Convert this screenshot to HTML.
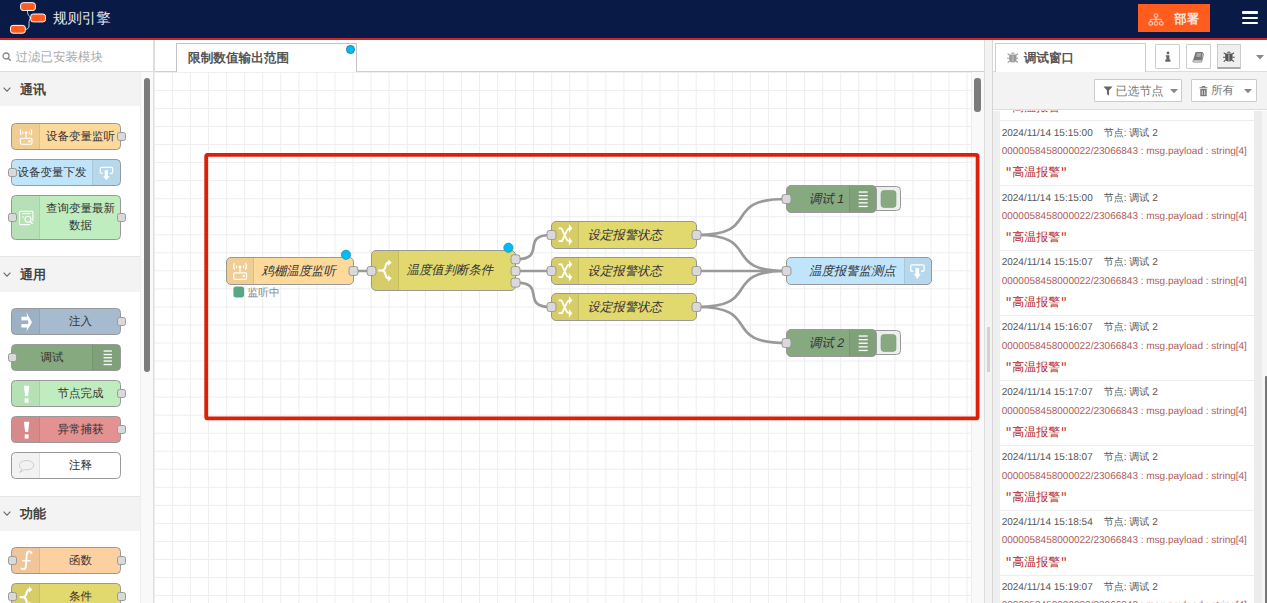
<!DOCTYPE html><html><head><meta charset="utf-8"><style>
*{box-sizing:border-box}
html,body{margin:0;padding:0}
body{text-rendering:geometricPrecision;width:1267px;height:603px;overflow:hidden;position:relative;background:#fff;font-family:"Liberation Sans",sans-serif;color:#333}
.a{position:absolute}
.hdr{left:0;top:0;width:1267px;height:38px;background:#0a1a46;border-bottom:2.5px solid #c62a2a;height:40px}
.cat{left:0;width:140px;height:36px;background:#f3f3f3;border-top:1px solid #e6e6e6}
.cat .chev{position:absolute;left:2.5px;top:14.2px;width:8px;height:5px}
.cat .t{position:absolute;left:20px;top:9px;font-size:13px;font-weight:bold;color:#444;line-height:16px}
.pn{left:11px;width:110px;border:1px solid #999;border-radius:4.5px;}
.pn .ic{position:absolute;top:0;bottom:0;width:28px;border-right:1px solid rgba(0,0,0,0.07);background:rgba(0,0,0,0.05)}
.pn .lb{position:absolute;top:2.6px;bottom:0;font-size:11.5px;color:#333;display:flex;align-items:center;justify-content:center;text-align:center;line-height:17.6px}
.port{position:absolute;width:9px;height:9px;background:#d9d9d9;border:1px solid #999;border-radius:2.5px}
.dbg{left:1000px;width:254px;height:65px;border-bottom:1px solid #eee;background:#fff}
.dbg .d{position:absolute;left:1.7px;top:6.3px;font-size:10px;color:#555;white-space:nowrap;line-height:12px}
.dbg .p{position:absolute;left:1.7px;top:24.6px;font-size:10px;color:#ad5c5c;white-space:nowrap;line-height:12px}
.dbg .s{position:absolute;left:5px;top:44px;font-size:12px;font-family:'Liberation Mono',monospace;color:#b72828;white-space:nowrap;line-height:16px}
</style></head><body>
<div class="a hdr"></div>
<svg class="a" style="left:0;top:0" width="60" height="38" viewBox="0 0 60 38">
<path d="M27.5 11 C27.5 16 30 16 30.5 18 C29 20 29 22 29 26 C29 28 27.5 29.3 25.8 29.3" fill="none" stroke="#dfe2ea" stroke-width="0.9"/><circle cx="30.3" cy="18" r="0.8" fill="#fff"/>
<rect x="20.6" y="2.7" width="14.8" height="7.8" rx="2.5" fill="#ff5c1e" stroke="#fff" stroke-width="1"/>
<rect x="30.7" y="14" width="14.8" height="7.9" rx="2.5" fill="#ff5c1e" stroke="#fff" stroke-width="1"/>
<rect x="10.5" y="25.4" width="14.8" height="7.8" rx="2.5" fill="#ff5c1e" stroke="#fff" stroke-width="1"/>
</svg>
<div class="a" style="left:53px;top:8.5px;font-size:14.4px;color:#e6e8ee;line-height:20px;letter-spacing:0px">规则引擎</div>
<div class="a" style="left:1138px;top:4.3px;width:72px;height:27.4px;background:#ff5c1e"></div>
<svg class="a" style="left:1148px;top:13px" width="16" height="13" viewBox="0 0 16 13">
<g fill="none" stroke="#fbe2d4" stroke-width="0.9">
<rect x="6.3" y="1" width="3.4" height="3" rx="0.4"/>
<path d="M8 4 V6.3 M2.7 8.8 V6.3 H13.3 V8.8 M8 6.3 V8.8"/>
<rect x="1" y="8.8" width="3.4" height="3.2" rx="0.4"/>
<rect x="6.3" y="8.8" width="3.4" height="3.2" rx="0.4"/>
<rect x="11.6" y="8.8" width="3.4" height="3.2" rx="0.4"/>
</g></svg>
<div class="a" style="left:1174.3px;top:11px;font-size:12.4px;font-weight:bold;color:#fbe6dc;line-height:16px">部署</div>
<div class="a" style="left:1242px;top:11.4px;width:15.6px;height:2.5px;background:#fff;border-radius:1px"></div>
<div class="a" style="left:1242px;top:16.8px;width:15.6px;height:2.5px;background:#fff;border-radius:1px"></div>
<div class="a" style="left:1242px;top:21.7px;width:15.6px;height:2.5px;background:#fff;border-radius:1px"></div>
<div class="a" style="left:0;top:40px;width:153px;height:32px;background:#fff;border-bottom:1px solid #ddd"></div>
<svg class="a" style="left:2px;top:52px" width="10" height="10" viewBox="0 0 10 10"><circle cx="4" cy="4" r="3" fill="none" stroke="#888" stroke-width="1.3"/><path d="M6.2 6.2 L8.8 8.8" stroke="#888" stroke-width="1.5"/></svg>
<div class="a" style="left:15.5px;top:48.8px;font-size:12.5px;color:#aaa;line-height:16px">过滤已安装模块</div>
<div class="a" style="left:140px;top:72px;width:13px;height:531px;background:#f9f9f9;border-left:1px solid #eee"></div>
<div class="a" style="left:143.6px;top:77.8px;width:6.4px;height:294px;background:#7b7b7b;border-radius:3.2px"></div>
<div class="a" style="left:153px;top:40px;width:2px;height:563px;background:#ddd"></div>
<div class="a cat" style="top:72.0px;height:34px;border-top-color:#f3f3f3"><svg class="chev" style="top:14.2px" viewBox="0 0 8 5"><path d="M0.6 0.7 L4 4.1 L7.4 0.7" fill="none" stroke="#666" stroke-width="1.1"/></svg><div class="t" style="top:9.0px">通讯</div></div>
<div class="a cat" style="top:256.0px;"><svg class="chev" style="top:15.4px" viewBox="0 0 8 5"><path d="M0.6 0.7 L4 4.1 L7.4 0.7" fill="none" stroke="#666" stroke-width="1.1"/></svg><div class="t" style="top:10.2px">通用</div></div>
<div class="a cat" style="top:496.0px;height:35px"><svg class="chev" style="top:14.2px" viewBox="0 0 8 5"><path d="M0.6 0.7 L4 4.1 L7.4 0.7" fill="none" stroke="#666" stroke-width="1.1"/></svg><div class="t" style="top:9.0px">功能</div></div>
<div class="a pn" style="top:123.0px;height:27.0px;background:#fdd99b"><div class="ic" style="left:0;border-radius:3.5px 0 0 3.5px"><svg width="28" height="26.2" viewBox="0 0 27 26.2" style="position:absolute;left:0;top:0"><g transform="translate(1.08 0.08) scale(0.92)"><g fill="none" stroke="#fff" stroke-width="1.2"><rect x="7.3" y="15.4" width="12.7" height="6.5" rx="1.2"/><path d="M13.5 9.5 V15"/><path d="M8 5.8 Q6.2 9 8 12.2 M19 5.8 Q20.8 9 19 12.2 M10.2 8 Q9.4 9.3 10.2 10.7 M16.8 8 Q17.6 9.3 16.8 10.7"/></g><circle cx="13.5" cy="9.5" r="1.5" fill="#fff"/><circle cx="17.2" cy="18.6" r="1.3" fill="#fff"/></g></svg></div><div class="lb" style="left:29px;right:0;">设备变量监听</div></div>
<div class="a port" style="left:117px;top:132.0px"></div>
<div class="a pn" style="top:159.0px;height:27.0px;background:#c0e4fa"><div class="ic" style="right:0;border-right:none;border-left:1px solid rgba(0,0,0,0.07);border-radius:0 3.5px 3.5px 0"><svg width="28" height="26.2" viewBox="0 0 27 26.2" style="position:absolute;left:0;top:0"><g transform="translate(1.08 0.68) scale(0.92)"><path d="M8.7 13.75 H7.5 Q6.25 13.75 6.25 12.5 V8.6 Q6.25 7.35 7.5 7.35 H18.4 Q19.65 7.35 19.65 8.6 V12.5 Q19.65 13.75 18.4 13.75 H16.6" fill="none" stroke="#fff" stroke-width="1.4"/><path d="M11 10.4 H14.6 V16.8 H16.3 L12.8 21.4 L9.3 16.8 H11 Z" fill="#fff"/></g></svg></div><div class="lb" style="left:0;right:28px">设备变量下发</div></div>
<div class="a port" style="left:7.5px;top:168.0px"></div>
<div class="a pn" style="top:195.0px;height:45.0px;background:#c0edc0"><div class="ic" style="left:0;border-radius:3.5px 0 0 3.5px"><svg width="28" height="44.3" viewBox="0 0 27 44.3" style="position:absolute;left:0;top:0"><g fill="none" stroke="#fff" stroke-width="1.1"><path d="M20.4 25.3 V16.3 Q20.4 15.4 19.5 15.4 H7.9 Q7 15.4 7 16.3 V27.7 Q7 28.6 7.9 28.6 H17.5"/><path d="M9.7 17.6 H18.3"/><path d="M9.7 21 H11.6"/><circle cx="15.5" cy="23.3" r="3"/><path d="M17.7 25.5 L20.2 28"/></g></svg></div><div class="lb" style="left:29px;right:0;top:1.3px">查询变量最新<br>数据</div></div>
<div class="a port" style="left:7.5px;top:213.0px"></div>
<div class="a port" style="left:117px;top:213.0px"></div>
<div class="a pn" style="top:308.0px;height:27.0px;background:#a6bbcf"><div class="ic" style="left:0;border-radius:3.5px 0 0 3.5px"><svg width="28" height="26.5" viewBox="0 0 27 26.5" style="position:absolute;left:0;top:0"><g transform="translate(0.00 -0.25) scale(1.00)"><rect x="8.9" y="8" width="6.6" height="3.6" fill="#fff"/><rect x="8.9" y="15.3" width="6.6" height="3.5" fill="#fff"/><path d="M13.8 3.4 L19.5 13.4 L13.8 23.1 L15.9 13.4 Z" fill="#fff"/></g></svg></div><div class="lb" style="left:29px;right:0;">注入</div></div>
<div class="a port" style="left:117px;top:317.0px"></div>
<div class="a pn" style="top:344.0px;height:27.0px;background:#87a980"><div class="ic" style="right:0;border-right:none;border-left:1px solid rgba(0,0,0,0.07);border-radius:0 3.5px 3.5px 0"><svg width="28" height="26.2" viewBox="0 0 27 26.2" style="position:absolute;left:0;top:0"><g transform="translate(0.00 -0.60) scale(1.00)"><g fill="#fff"><rect x="10.1" y="6" width="8.3" height="1.3"/><rect x="10.1" y="9.5" width="8.3" height="1.3"/><rect x="10.1" y="12.7" width="8.3" height="1.3"/><rect x="10.1" y="16" width="8.3" height="1.3"/><rect x="10.1" y="19.5" width="8.3" height="1.3"/></g></g></svg></div><div class="lb" style="left:0;right:28px">调试</div></div>
<div class="a port" style="left:7.5px;top:353.0px"></div>
<div class="a pn" style="top:380.0px;height:27.0px;background:#c0edc0"><div class="ic" style="left:0;border-radius:3.5px 0 0 3.5px"><svg width="28" height="26.2" viewBox="0 0 27 26.2" style="position:absolute;left:0;top:0"><g transform="translate(0.00 -0.50) scale(1.00)"><path d="M11.4 5.2 H16.8 L15.6 15.6 H12.6 Z" fill="#fff"/><rect x="12.2" y="17.9" width="3.9" height="4.2" fill="#fff"/></g></svg></div><div class="lb" style="left:29px;right:0;">节点完成</div></div>
<div class="a port" style="left:117px;top:389.0px"></div>
<div class="a pn" style="top:416.0px;height:27.0px;background:#e49191"><div class="ic" style="left:0;border-radius:3.5px 0 0 3.5px"><svg width="28" height="26.2" viewBox="0 0 27 26.2" style="position:absolute;left:0;top:0"><g transform="translate(0.00 -0.50) scale(1.00)"><path d="M11.4 5.2 H16.8 L15.6 15.6 H12.6 Z" fill="#fff"/><rect x="12.2" y="17.9" width="3.9" height="4.2" fill="#fff"/></g></svg></div><div class="lb" style="left:29px;right:0;">异常捕获</div></div>
<div class="a port" style="left:117px;top:425.0px"></div>
<div class="a pn" style="top:452.0px;height:27.0px;background:#ffffff"><div class="ic" style="left:0;border-radius:3.5px 0 0 3.5px"><svg width="28" height="26.5" viewBox="0 0 27 26.5" style="position:absolute;left:0;top:0"><g transform="translate(0.00 -0.25) scale(1.00)"><path d="M14 7.8 C18.2 7.8 21.2 9.8 21.2 12.4 C21.2 15 18.2 17 14 17 C13.3 17 12.6 16.9 12 16.8 L7.2 19.8 L9.3 16.3 C7.7 15.4 6.9 14 6.9 12.4 C6.9 9.8 9.9 7.8 14 7.8 Z" fill="none" stroke="#ccc" stroke-width="1"/></g></svg></div><div class="lb" style="left:29px;right:0;">注释</div></div>
<div class="a pn" style="top:547.0px;height:27.0px;background:#fdd0a2"><div class="ic" style="left:0;border-radius:3.5px 0 0 3.5px"><svg width="28" height="26.2" viewBox="0 0 27 26.2" style="position:absolute;left:0;top:0"><g transform="translate(-0.80 -0.40) scale(1.00)"><path d="M20.1 6.4 C19.6 4.6 18.5 3.9 17.4 3.9 C15.6 3.9 15.1 5.5 15 7.5 L14.2 18.5 C14 20.8 12.8 21.6 11.6 21.6 C10.6 21.6 9.8 21 9.4 20.2" fill="none" stroke="#fff" stroke-width="1.75"/><path d="M10.4 13.2 H19" stroke="#fff" stroke-width="1.3"/></g></svg></div><div class="lb" style="left:29px;right:0;">函数</div></div>
<div class="a port" style="left:7.5px;top:556.0px"></div>
<div class="a port" style="left:117px;top:556.0px"></div>
<div class="a pn" style="top:583.0px;height:27.0px;background:#e2d96e"><div class="ic" style="left:0;border-radius:3.5px 0 0 3.5px"><svg width="28" height="26.2" viewBox="0 0 27 26.2" style="position:absolute;left:0;top:0"><g transform="translate(0.68 0.28) scale(0.95)"><g transform="translate(0 13.5)"><path d="M6.8 0 H10.5 C12.5 0 13.3 -1.5 13.8 -3.5 C14.4 -6.3 15 -7.9 17 -7.9 M10.5 0 C12.5 0 13.3 1.5 13.8 3.5 C14.4 6.3 15 7.9 17 7.9" fill="none" stroke="#fff" stroke-width="2.2"/><path d="M16.6 -11.1 L20.3 -7.9 L16.6 -4.7 Z M16.6 4.7 L20.3 7.9 L16.6 11.1 Z" fill="#fff"/></g></g></svg></div><div class="lb" style="left:29px;right:0;">条件</div></div>
<div class="a port" style="left:7.5px;top:592.0px"></div>
<div class="a port" style="left:117px;top:592.0px"></div>
<div class="a" style="left:155px;top:40px;width:830px;height:32px;background:#fff;border-bottom:1px solid #ccc"></div>
<div class="a" style="left:176.3px;top:43.2px;width:180.4px;height:28.8px;background:#fff;border:1px solid #c4c4c4;border-bottom:none"></div>
<div class="a" style="left:188px;top:49.5px;font-size:12.65px;font-weight:bold;color:#555;line-height:16px">限制数值输出范围</div>
<div class="a" style="left:346px;top:45.3px;width:8.6px;height:8.6px;border-radius:50%;background:#00bcf5;border:0.6px solid #2a7fa8"></div>
<svg class="a" style="left:0;top:0" width="1267" height="603"><path d="M154.39 72 V603 M172.45 72 V603 M190.51 72 V603 M208.57 72 V603 M226.63 72 V603 M244.69 72 V603 M262.75 72 V603 M280.81 72 V603 M298.87 72 V603 M316.93 72 V603 M334.99 72 V603 M353.05 72 V603 M371.11 72 V603 M389.17 72 V603 M407.23 72 V603 M425.29 72 V603 M443.35 72 V603 M461.41 72 V603 M479.47 72 V603 M497.53 72 V603 M515.59 72 V603 M533.65 72 V603 M551.71 72 V603 M569.77 72 V603 M587.83 72 V603 M605.89 72 V603 M623.95 72 V603 M642.01 72 V603 M660.07 72 V603 M678.13 72 V603 M696.19 72 V603 M714.25 72 V603 M732.31 72 V603 M750.37 72 V603 M768.43 72 V603 M786.49 72 V603 M804.55 72 V603 M822.61 72 V603 M840.67 72 V603 M858.73 72 V603 M876.79 72 V603 M894.85 72 V603 M912.91 72 V603 M930.97 72 V603 M949.03 72 V603 M967.09 72 V603 M155 72.40 H971 M155 90.44 H971 M155 108.48 H971 M155 126.52 H971 M155 144.56 H971 M155 162.60 H971 M155 180.64 H971 M155 198.68 H971 M155 216.72 H971 M155 234.76 H971 M155 252.80 H971 M155 270.84 H971 M155 288.88 H971 M155 306.92 H971 M155 324.96 H971 M155 343.00 H971 M155 361.04 H971 M155 379.08 H971 M155 397.12 H971 M155 415.16 H971 M155 433.20 H971 M155 451.24 H971 M155 469.28 H971 M155 487.32 H971 M155 505.36 H971 M155 523.40 H971 M155 541.44 H971 M155 559.48 H971 M155 577.52 H971 M155 595.56 H971" stroke="#eee" stroke-width="1" fill="none"/></svg>
<div class="a" style="left:971px;top:72px;width:13px;height:531px;background:#f9f9f9;border-left:1px solid #eee"></div>
<div class="a" style="left:974.3px;top:77.9px;width:6.4px;height:34px;background:#7b7b7b;border-radius:3.2px"></div>
<div class="a" style="left:984px;top:40px;width:8.5px;height:563px;background:#f3f3f3;border-left:1px solid #ddd;border-right:1.5px solid #d6d6d6"></div>
<div class="a" style="left:987px;top:326.6px;width:3px;height:45.8px;background:#d2d2d2"></div>
<svg class="a" style="left:0;top:0" width="1267" height="603"><path d="M353 271 L371 271 M515.5 259.3 C548.1 259.3 518.9 235.0 551.5 235.0 M515.5 271.0 C542.5 271.0 524.5 271.0 551.5 271.0 M515.5 282.7 C548.1 282.7 518.9 307.0 551.5 307.0 M696.5 235.0 C764.0 235.0 719.0 199.0 786.5 199.0 M696.5 235.0 C764.0 235.0 719.0 271.0 786.5 271.0 M696.5 271.0 C764.0 271.0 719.0 271.0 786.5 271.0 M696.5 307.0 C764.0 307.0 719.0 271.0 786.5 271.0 M696.5 307.0 C764.0 307.0 719.0 343.0 786.5 343.0" fill="none" stroke="#999" stroke-width="2.7"/><rect x="233.4" y="286.4" width="10.7" height="11" rx="2.6" fill="#58a784"/><text x="247.5" y="296" font-size="10.8" fill="#888">监听中</text><rect x="226.5" y="257.5" width="127.0" height="27.0" rx="4.5" fill="#fdd99b" stroke="#999" stroke-width="1"/><path d="M231.0 258.0 h22.5 v26.0 h-22.5 a4 4 0 0 1 -4 -4 v-18.0 a4 4 0 0 1 4 -4z" fill="rgba(0,0,0,0.05)"/><path d="M253.5 258.0 V284.0" stroke="rgba(0,0,0,0.1)" stroke-width="1"/><g transform="translate(226.5 257.5)"><g fill="none" stroke="#fff" stroke-width="1.15"><rect x="7.3" y="15.4" width="12.7" height="6.5" rx="1.2"/><path d="M13.5 9.5 V15"/><path d="M8 5.8 Q6.2 9 8 12.2 M19 5.8 Q20.8 9 19 12.2 M10.2 8 Q9.4 9.3 10.2 10.7 M16.8 8 Q17.6 9.3 16.8 10.7"/></g><circle cx="13.5" cy="9.5" r="1.4" fill="#fff"/><circle cx="17.2" cy="18.6" r="1.2" fill="#fff"/></g><text x="261.5" y="274.5" font-size="12.4" font-style="italic" fill="#333">鸡棚温度监听</text><rect x="349.0" y="266.5" width="9" height="9" rx="2.5" fill="#d9d9d9" stroke="#999" stroke-width="1"/><circle cx="346.0" cy="254.8" r="4.7" fill="#00bcf5" stroke="#2a7fa8" stroke-width="0.6"/><rect x="371.5" y="250.5" width="144.0" height="40.0" rx="4.5" fill="#e2d96e" stroke="#999" stroke-width="1"/><path d="M376.0 251.0 h22.5 v39.0 h-22.5 a4 4 0 0 1 -4 -4 v-31.0 a4 4 0 0 1 4 -4z" fill="rgba(0,0,0,0.05)"/><path d="M398.5 251.0 V290.0" stroke="rgba(0,0,0,0.1)" stroke-width="1"/><g transform="translate(371.5 257.0)"><g transform="translate(0 13.5)"><path d="M6.8 0 H10.5 C12.5 0 13.3 -1.5 13.8 -3.5 C14.4 -6.3 15 -7.9 17 -7.9 M10.5 0 C12.5 0 13.3 1.5 13.8 3.5 C14.4 6.3 15 7.9 17 7.9" fill="none" stroke="#fff" stroke-width="2.2"/><path d="M16.6 -11.1 L20.3 -7.9 L16.6 -4.7 Z M16.6 4.7 L20.3 7.9 L16.6 11.1 Z" fill="#fff"/></g></g><text x="406.5" y="274.0" font-size="12.4" font-style="italic" fill="#333">温度值判断条件</text><rect x="367.0" y="266.5" width="9" height="9" rx="2.5" fill="#d9d9d9" stroke="#999" stroke-width="1"/><rect x="511.0" y="254.8" width="9" height="9" rx="2.5" fill="#d9d9d9" stroke="#999" stroke-width="1"/><rect x="511.0" y="266.5" width="9" height="9" rx="2.5" fill="#d9d9d9" stroke="#999" stroke-width="1"/><rect x="511.0" y="278.2" width="9" height="9" rx="2.5" fill="#d9d9d9" stroke="#999" stroke-width="1"/><circle cx="508.4" cy="247.7" r="4.7" fill="#00bcf5" stroke="#2a7fa8" stroke-width="0.6"/><rect x="551.5" y="221.5" width="145.0" height="27.0" rx="4.5" fill="#e2d96e" stroke="#999" stroke-width="1"/><path d="M556.0 222.0 h22.5 v26.0 h-22.5 a4 4 0 0 1 -4 -4 v-18.0 a4 4 0 0 1 4 -4z" fill="rgba(0,0,0,0.05)"/><path d="M578.5 222.0 V248.0" stroke="rgba(0,0,0,0.1)" stroke-width="1"/><g transform="translate(551.5 221.5)"><path d="M7 6.8 H10 L13.8 14.8 Q15.4 19.7 17.8 19.7 M7 19.7 H10.5 L15.3 9.4 Q16.4 6.8 17.8 6.8" fill="none" stroke="#fff" stroke-width="1.8"/><path d="M17.4 2.5 L20.8 6.8 L17.4 11 Z M17.4 15.5 L20.8 19.7 L17.4 24 Z" fill="#fff"/></g><text x="587.5" y="238.5" font-size="12.4" font-style="italic" fill="#333">设定报警状态</text><rect x="547.0" y="230.5" width="9" height="9" rx="2.5" fill="#d9d9d9" stroke="#999" stroke-width="1"/><rect x="692.0" y="230.5" width="9" height="9" rx="2.5" fill="#d9d9d9" stroke="#999" stroke-width="1"/><rect x="551.5" y="257.5" width="145.0" height="27.0" rx="4.5" fill="#e2d96e" stroke="#999" stroke-width="1"/><path d="M556.0 258.0 h22.5 v26.0 h-22.5 a4 4 0 0 1 -4 -4 v-18.0 a4 4 0 0 1 4 -4z" fill="rgba(0,0,0,0.05)"/><path d="M578.5 258.0 V284.0" stroke="rgba(0,0,0,0.1)" stroke-width="1"/><g transform="translate(551.5 257.5)"><path d="M7 6.8 H10 L13.8 14.8 Q15.4 19.7 17.8 19.7 M7 19.7 H10.5 L15.3 9.4 Q16.4 6.8 17.8 6.8" fill="none" stroke="#fff" stroke-width="1.8"/><path d="M17.4 2.5 L20.8 6.8 L17.4 11 Z M17.4 15.5 L20.8 19.7 L17.4 24 Z" fill="#fff"/></g><text x="587.5" y="274.5" font-size="12.4" font-style="italic" fill="#333">设定报警状态</text><rect x="547.0" y="266.5" width="9" height="9" rx="2.5" fill="#d9d9d9" stroke="#999" stroke-width="1"/><rect x="692.0" y="266.5" width="9" height="9" rx="2.5" fill="#d9d9d9" stroke="#999" stroke-width="1"/><rect x="551.5" y="293.5" width="145.0" height="27.0" rx="4.5" fill="#e2d96e" stroke="#999" stroke-width="1"/><path d="M556.0 294.0 h22.5 v26.0 h-22.5 a4 4 0 0 1 -4 -4 v-18.0 a4 4 0 0 1 4 -4z" fill="rgba(0,0,0,0.05)"/><path d="M578.5 294.0 V320.0" stroke="rgba(0,0,0,0.1)" stroke-width="1"/><g transform="translate(551.5 293.5)"><path d="M7 6.8 H10 L13.8 14.8 Q15.4 19.7 17.8 19.7 M7 19.7 H10.5 L15.3 9.4 Q16.4 6.8 17.8 6.8" fill="none" stroke="#fff" stroke-width="1.8"/><path d="M17.4 2.5 L20.8 6.8 L17.4 11 Z M17.4 15.5 L20.8 19.7 L17.4 24 Z" fill="#fff"/></g><text x="587.5" y="310.5" font-size="12.4" font-style="italic" fill="#333">设定报警状态</text><rect x="547.0" y="302.5" width="9" height="9" rx="2.5" fill="#d9d9d9" stroke="#999" stroke-width="1"/><rect x="692.0" y="302.5" width="9" height="9" rx="2.5" fill="#d9d9d9" stroke="#999" stroke-width="1"/><rect x="860.5" y="186.5" width="40" height="24" rx="4" fill="#eee" stroke="#999" stroke-width="1"/><rect x="881" y="190.5" width="15" height="17" rx="3" fill="#87a980" stroke="#7d9d76" stroke-width="0.6"/><rect x="786.5" y="185.5" width="90.0" height="27.0" rx="4.5" fill="#87a980" stroke="#999" stroke-width="1"/><path d="M849.5 186.0 h22.5 a4 4 0 0 1 4 4 v18.0 a4 4 0 0 1 -4 4 h-22.5 z" fill="rgba(0,0,0,0.05)"/><path d="M849.5 186.0 V212.0" stroke="rgba(0,0,0,0.1)" stroke-width="1"/><g transform="translate(849.5 185.5)"><g fill="#fff"><rect x="9.2" y="5.9" width="9" height="1.3"/><rect x="9.2" y="9.5" width="9" height="1.3"/><rect x="9.2" y="13.1" width="9" height="1.3"/><rect x="9.2" y="16.7" width="9" height="1.3"/><rect x="9.2" y="20.3" width="9" height="1.3"/></g></g><text x="809.0" y="202.5" font-size="12.4" font-style="italic" fill="#333">调试 1</text><rect x="782.0" y="194.5" width="9" height="9" rx="2.5" fill="#d9d9d9" stroke="#999" stroke-width="1"/><rect x="860.5" y="330.5" width="40" height="24" rx="4" fill="#eee" stroke="#999" stroke-width="1"/><rect x="881" y="334.5" width="15" height="17" rx="3" fill="#87a980" stroke="#7d9d76" stroke-width="0.6"/><rect x="786.5" y="329.5" width="90.0" height="27.0" rx="4.5" fill="#87a980" stroke="#999" stroke-width="1"/><path d="M849.5 330.0 h22.5 a4 4 0 0 1 4 4 v18.0 a4 4 0 0 1 -4 4 h-22.5 z" fill="rgba(0,0,0,0.05)"/><path d="M849.5 330.0 V356.0" stroke="rgba(0,0,0,0.1)" stroke-width="1"/><g transform="translate(849.5 329.5)"><g fill="#fff"><rect x="9.2" y="5.9" width="9" height="1.3"/><rect x="9.2" y="9.5" width="9" height="1.3"/><rect x="9.2" y="13.1" width="9" height="1.3"/><rect x="9.2" y="16.7" width="9" height="1.3"/><rect x="9.2" y="20.3" width="9" height="1.3"/></g></g><text x="809.0" y="346.5" font-size="12.4" font-style="italic" fill="#333">调试 2</text><rect x="782.0" y="338.5" width="9" height="9" rx="2.5" fill="#d9d9d9" stroke="#999" stroke-width="1"/><rect x="786.5" y="257.5" width="145.0" height="27.0" rx="4.5" fill="#c0e4fa" stroke="#999" stroke-width="1"/><path d="M904.5 258.0 h22.5 a4 4 0 0 1 4 4 v18.0 a4 4 0 0 1 -4 4 h-22.5 z" fill="rgba(0,0,0,0.05)"/><path d="M904.5 258.0 V284.0" stroke="rgba(0,0,0,0.1)" stroke-width="1"/><g transform="translate(904.5 257.5)"><path d="M8.7 13.75 H7.5 Q6.25 13.75 6.25 12.5 V8.6 Q6.25 7.35 7.5 7.35 H18.4 Q19.65 7.35 19.65 8.6 V12.5 Q19.65 13.75 18.4 13.75 H16.6" fill="none" stroke="#fff" stroke-width="1.3"/><path d="M11 10.4 H14.6 V16.8 H16.3 L12.8 21.4 L9.3 16.8 H11 Z" fill="#fff"/></g><text x="809.0" y="274.5" font-size="12.4" font-style="italic" fill="#333">温度报警监测点</text><rect x="782.0" y="266.5" width="9" height="9" rx="2.5" fill="#d9d9d9" stroke="#999" stroke-width="1"/><rect x="206.2" y="154.9" width="771.4" height="263.5" rx="1.5" fill="none" stroke="#dc1f0b" stroke-width="3.8"/></svg>
<div class="a" style="left:992.5px;top:40px;width:274.5px;height:32px;background:#fff;border-bottom:1px solid #ddd"></div>
<div class="a" style="left:995.3px;top:43px;width:150.3px;height:29px;background:#fff;border:1px solid #ccc;border-bottom:none"></div>
<svg class="a" style="left:1006.8px;top:51.6px" width="11.7" height="11" viewBox="0 0 11.7 11"><g fill="#999" stroke="#999" stroke-width="0"><path d="M3.7 1.8 Q5.85 -0.6 8 1.8 Z"/><path d="M2.2 2.5 H9.5 V7 Q9.5 10.6 5.85 10.6 Q2.2 10.6 2.2 7 Z"/><path d="M0.7 1.8 L2.5 3.1 M0 6.3 H2.4 M0.7 10.6 L2.6 9 M11 1.8 L9.2 3.1 M11.7 6.3 H9.3 M11 10.6 L9.1 9" fill="none" stroke-width="1.1"/><path d="M5.85 3.2 V10" stroke="#ccc" stroke-width="1.5" opacity="0.6"/></g></svg>
<div class="a" style="left:1024px;top:49.8px;font-size:12.5px;font-weight:bold;color:#555;line-height:16px">调试窗口</div>
<div class="a" style="left:1155.2px;top:44.3px;width:24.8px;height:25px;background:#fff;border:1px solid #ccc;border-radius:1px"></div>
<div class="a" style="left:1185.9px;top:44.3px;width:24.8px;height:25px;background:#fff;border:1px solid #ccc;border-radius:1px"></div>
<div class="a" style="left:1216.6px;top:44.3px;width:24.9px;height:25px;background:#efefef;border:1px solid #ccc;border-bottom:2px solid #aaa;border-radius:1px"></div>
<svg class="a" style="left:1164.5px;top:50.5px" width="6" height="11" viewBox="0 0 6 11"><circle cx="3" cy="2" r="1.4" fill="#666"/><path d="M0.8 4.3 H4.4 V8.5 H5.4 V10.7 H0.3 V8.5 H1.4 V5.6 H0.8 Z" fill="#666"/></svg>
<svg class="a" style="left:1192px;top:50.5px" width="13" height="12" viewBox="0 0 13 12"><path d="M3.6 1.1 H10.9 L9.6 9.4 H1 Z" fill="#777"/><path d="M1 9.4 Q0.2 11 1.8 11 H9.6 L11.6 2.4" fill="none" stroke="#888" stroke-width="1"/><path d="M4.9 3 H9.1 M4.3 5 H8.8" stroke="#ddd" stroke-width="0.9"/></svg>
<svg class="a" style="left:1223.1px;top:51px" width="11.7" height="11" viewBox="0 0 11.7 11"><g fill="#555" stroke="#555" stroke-width="0"><path d="M3.7 1.8 Q5.85 -0.6 8 1.8 Z"/><path d="M2.2 2.5 H9.5 V7 Q9.5 10.6 5.85 10.6 Q2.2 10.6 2.2 7 Z"/><path d="M0.7 1.8 L2.5 3.1 M0 6.3 H2.4 M0.7 10.6 L2.6 9 M11 1.8 L9.2 3.1 M11.7 6.3 H9.3 M11 10.6 L9.1 9" fill="none" stroke-width="1.1"/><path d="M5.85 3.2 V10" stroke="#ccc" stroke-width="1.5" opacity="0.6"/></g></svg>
<svg class="a" style="left:1256px;top:55px" width="8" height="5" viewBox="0 0 8 5"><path d="M0 0 H8 L4 4.5 Z" fill="#888"/></svg>
<div class="a" style="left:992.5px;top:72px;width:274.5px;height:38px;background:#f3f3f3;border-bottom:1px solid #ddd"></div>
<div class="a" style="left:1094px;top:79px;width:88px;height:23px;background:#fff;border:1px solid #ccc;border-radius:1px"></div>
<svg class="a" style="left:1103px;top:86px" width="10" height="10" viewBox="0 0 10 10"><path d="M0.5 0.5 H9.5 L6 4.5 V9.5 L4 8 V4.5 Z" fill="#666"/></svg>
<div class="a" style="left:1115.5px;top:83px;font-size:12px;color:#777;line-height:16px">已选节点</div>
<svg class="a" style="left:1169.5px;top:89px" width="8" height="5" viewBox="0 0 8 5"><path d="M0 0 H8 L4 4.3 Z" fill="#888"/></svg>
<div class="a" style="left:1191px;top:79px;width:66px;height:23px;background:#fff;border:1px solid #ccc;border-radius:1px"></div>
<svg class="a" style="left:1199px;top:85.5px" width="9" height="11" viewBox="0 0 9 11"><path d="M0.5 1.8 H8.5 M3 1.8 V0.6 H6 V1.8" fill="none" stroke="#777" stroke-width="1"/><path d="M1.3 3 H7.7 V10.2 H1.3 Z" fill="#777"/><path d="M3.3 4.3 V9 M5.7 4.3 V9" stroke="#fff" stroke-width="0.7"/></svg>
<div class="a" style="left:1211px;top:83px;font-size:11.6px;color:#777;line-height:16px">所有</div>
<svg class="a" style="left:1244px;top:89px" width="8" height="5" viewBox="0 0 8 5"><path d="M0 0 H8 L4 4.3 Z" fill="#888"/></svg>
<div class="a" style="left:992.5px;top:110px;width:274.5px;height:493px;background:#fff"></div>
<div class="a" style="left:992.5px;top:111px;width:7.5px;height:492px;background:#efefef"></div>
<div class="a" style="left:1254.2px;top:111px;width:8px;height:492px;background:#ececec"></div>
<div class="a" style="left:1262.2px;top:111px;width:4.8px;height:492px;background:#f6f6f6"></div>
<div class="a" style="left:1265px;top:376px;width:2px;height:227px;background:#777;border-radius:1px 0 0 0"></div>
<div class="a dbg" style="top:55.6px;height:65px;clip-path:inset(55px 0 0 0)"><div class="s">"高温报警"</div></div>
<div class="a dbg" style="top:120.4px;border-top:1px solid #eee;border-bottom:none"><div class="d">2024/11/14 15:15:00&nbsp;&nbsp;&nbsp; 节点: 调试 2</div><div class="p">0000058458000022/23066843 : msg.payload : string[4]</div><div class="s">"高温报警"</div></div>
<div class="a dbg" style="top:185.3px;border-top:1px solid #eee;border-bottom:none"><div class="d">2024/11/14 15:15:00&nbsp;&nbsp;&nbsp; 节点: 调试 2</div><div class="p">0000058458000022/23066843 : msg.payload : string[4]</div><div class="s">"高温报警"</div></div>
<div class="a dbg" style="top:250.2px;border-top:1px solid #eee;border-bottom:none"><div class="d">2024/11/14 15:15:07&nbsp;&nbsp;&nbsp; 节点: 调试 2</div><div class="p">0000058458000022/23066843 : msg.payload : string[4]</div><div class="s">"高温报警"</div></div>
<div class="a dbg" style="top:315.2px;border-top:1px solid #eee;border-bottom:none"><div class="d">2024/11/14 15:16:07&nbsp;&nbsp;&nbsp; 节点: 调试 2</div><div class="p">0000058458000022/23066843 : msg.payload : string[4]</div><div class="s">"高温报警"</div></div>
<div class="a dbg" style="top:380.1px;border-top:1px solid #eee;border-bottom:none"><div class="d">2024/11/14 15:17:07&nbsp;&nbsp;&nbsp; 节点: 调试 2</div><div class="p">0000058458000022/23066843 : msg.payload : string[4]</div><div class="s">"高温报警"</div></div>
<div class="a dbg" style="top:445.0px;border-top:1px solid #eee;border-bottom:none"><div class="d">2024/11/14 15:18:07&nbsp;&nbsp;&nbsp; 节点: 调试 2</div><div class="p">0000058458000022/23066843 : msg.payload : string[4]</div><div class="s">"高温报警"</div></div>
<div class="a dbg" style="top:509.9px;border-top:1px solid #eee;border-bottom:none"><div class="d">2024/11/14 15:18:54&nbsp;&nbsp;&nbsp; 节点: 调试 2</div><div class="p">0000058458000022/23066843 : msg.payload : string[4]</div><div class="s">"高温报警"</div></div>
<div class="a dbg" style="top:574.8px;border-top:1px solid #eee;border-bottom:none"><div class="d">2024/11/14 15:19:07&nbsp;&nbsp;&nbsp; 节点: 调试 2</div><div class="p">0000058458000022/23066843 : msg.payload : string[4]</div><div class="s">"高温报警"</div></div>
</body></html>
